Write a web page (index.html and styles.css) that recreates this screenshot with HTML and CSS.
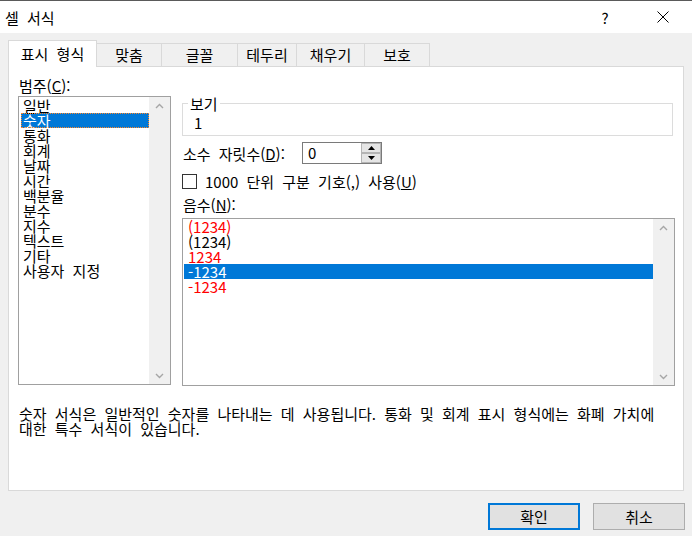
FILE: index.html
```html
<!DOCTYPE html>
<html lang="ko">
<head>
<meta charset="utf-8">
<title>셀 서식</title>
<link rel="stylesheet" href="styles.css">
</head>
<body>
<div class="window">
  <div class="titlebar">
    <span class="title">셀 서식</span>
    <span class="help">?</span>
    <span class="close"><svg width="12" height="12" viewBox="0 0 12 12"><path d="M0.5 0.5 L11.5 11.5 M11.5 0.5 L0.5 11.5" stroke="#000" stroke-width="1" fill="none"/></svg></span>
  </div>
  <div class="body">
    <div class="tabs">
      <div class="tab active w89">표시 형식</div>
      <div class="tab w65">맞춤</div>
      <div class="tab w76">글꼴</div>
      <div class="tab w59">테두리</div>
      <div class="tab w68">채우기</div>
      <div class="tab w65">보호</div>
    </div>
    <div class="panel">
      <div class="columns">
        <div class="leftcol">
          <div class="label">범주(<u>C</u>):</div>
          <div class="listbox cat">
            <ul class="items">
              <li>일반</li>
              <li class="sel focus">숫자</li>
              <li>통화</li>
              <li>회계</li>
              <li>날짜</li>
              <li>시간</li>
              <li>백분율</li>
              <li>분수</li>
              <li>지수</li>
              <li>텍스트</li>
              <li>기타</li>
              <li>사용자 지정</li>
            </ul>
            <div class="vscroll">
              <span class="arrow"><svg width="9" height="6" viewBox="0 0 9 6"><path d="M1 5 L4.5 1.5 L8 5" stroke="#a6a6a6" stroke-width="1.4" fill="none"/></svg></span>
              <span class="arrow"><svg width="9" height="6" viewBox="0 0 9 6"><path d="M1 1 L4.5 4.5 L8 1" stroke="#a6a6a6" stroke-width="1.4" fill="none"/></svg></span>
            </div>
          </div>
        </div>
        <div class="rightcol">
          <fieldset class="sample">
            <legend>보기</legend>
            <div class="sample-value">1</div>
          </fieldset>
          <div class="row decimals">
            <span class="dec-label">소수 자릿수(<u>D</u>):</span>
            <div class="spinbox">
              <span class="spin-value">0</span>
              <div class="spin">
                <span class="spin-btn"><svg width="7" height="4" viewBox="0 0 7 4"><path d="M0 4 L3.5 0 L7 4 Z" fill="#000"/></svg></span>
                <span class="spin-btn"><svg width="7" height="4" viewBox="0 0 7 4"><path d="M0 0 L3.5 4 L7 0 Z" fill="#000"/></svg></span>
              </div>
            </div>
          </div>
          <div class="row check">
            <span class="box"></span>
            <span class="check-label">1000 단위 구분 기호(,) 사용(<u>U</u>)</span>
          </div>
          <div class="label neg-label">음수(<u>N</u>):</div>
          <div class="listbox neg">
            <ul class="items">
              <li class="red">(1234)</li>
              <li>(1234)</li>
              <li class="red">1234</li>
              <li class="sel">-1234</li>
              <li class="red">-1234</li>
            </ul>
            <div class="vscroll">
              <span class="arrow"><svg width="9" height="6" viewBox="0 0 9 6"><path d="M1 5 L4.5 1.5 L8 5" stroke="#a6a6a6" stroke-width="1.4" fill="none"/></svg></span>
              <span class="arrow"><svg width="9" height="6" viewBox="0 0 9 6"><path d="M1 1 L4.5 4.5 L8 1" stroke="#a6a6a6" stroke-width="1.4" fill="none"/></svg></span>
            </div>
          </div>
        </div>
      </div>
      <p class="desc">숫자 서식은 일반적인 숫자를 나타내는 데 사용됩니다. 통화 및 회계 표시 형식에는 화폐 가치에<br>대한 특수 서식이 있습니다.</p>
    </div>
    <div class="buttons">
      <button class="btn default">확인</button>
      <button class="btn">취소</button>
    </div>
  </div>
</div>
</body>
</html>
```

FILE: styles.css
```css
html, body {
  margin: 0;
  padding: 0;
}
body {
  width: 692px;
  height: 536px;
  overflow: hidden;
  background: #f0f0f0;
  font-family: "Liberation Sans Narrow", "Noto Sans CJK KR", sans-serif;
  font-size: 15px;
  word-spacing: 4px;
  color: #000;
}
.window {
  width: 692px;
  height: 536px;
}
.titlebar {
  height: 32px;
  border-top: 1px solid #5a5a5a;
  background: #fff;
  display: flex;
  align-items: center;
}
.title {
  margin-left: 5px;
  line-height: 17px;
  flex: 1;
}
.help {
  width: 46px;
  text-align: center;
  font-size: 15px;
  line-height: 17px;
  margin-right: 12px;
}
.close {
  width: 46px;
  height: 32px;
  display: flex;
  align-items: center;
  justify-content: center;
  margin-right: 6px;
}
.body {
  padding: 7px 0 0 0;
}
.tabs {
  display: flex;
  align-items: flex-end;
  height: 26px;
  margin-left: 8px;
}
.tab {
  box-sizing: border-box;
  height: 23px;
  border-top: 1px solid #d9d9d9;
  border-right: 1px solid #d9d9d9;
  text-align: center;
  line-height: 22px;
  background: #f0f0f0;
}
.tab.active {
  height: 27px;
  margin-bottom: -1px;
  border-left: 1px solid #d9d9d9;
  background: #fff;
  line-height: 25px;
  position: relative;
  z-index: 1;
}
.w89 { width: 89px; }
.w65 { width: 65px; }
.w76 { width: 76px; }
.w59 { width: 59px; }
.w68 { width: 68px; }
.panel {
  box-sizing: border-box;
  width: 676px;
  height: 425px;
  margin-left: 8px;
  background: #fff;
  border: 1px solid #d9d9d9;
  padding: 10px 8px 0 9px;
}
.columns {
  display: flex;
  gap: 11px;
}
.leftcol {
  width: 153px;
  flex: none;
}
.rightcol {
  width: 493px;
  flex: none;
}
.label {
  line-height: 17px;
  padding-left: 1px;
}
.listbox {
  box-sizing: border-box;
  border: 1px solid #a0a0a0;
  background: #fff;
  display: flex;
}
.listbox.cat {
  margin-top: 2px;
  height: 289px;
}
.items {
  list-style: none;
  margin: 0;
  padding: 0;
  flex: 1;
}
.items li {
  height: 15px;
  line-height: 15px;
  white-space: nowrap;
}
.cat .items {
  padding: 1px 0 0 2px;
}
.cat .items li {
  padding-left: 2px;
}
.items li.sel {
  background: #0078d7;
  color: #fff;
}
.items li.focus {
  outline: 1px dotted #ff8728;
  outline-offset: -1px;
}
.vscroll {
  width: 21px;
  flex: none;
  background: #f0f0f0;
  display: flex;
  flex-direction: column;
  justify-content: space-between;
}
.arrow {
  height: 17px;
  display: flex;
  align-items: center;
  justify-content: center;
}
.sample {
  margin: 18px 2px 0 0;
  padding: 0 0 4px 5px;
  border: 1px solid #dcdcdc;
  min-width: 0;
}
.sample legend {
  padding: 0 2px;
  line-height: 17px;
}
.sample-value {
  margin-top: 2px;
  line-height: 17px;
  padding-left: 6px;
}
.row {
  display: flex;
  align-items: center;
}
.decimals {
  margin-top: 6px;
  height: 22px;
}
.dec-label {
  width: 120px;
  flex: none;
  padding-left: 1px;
  box-sizing: border-box;
}
.spinbox {
  box-sizing: border-box;
  width: 80px;
  height: 22px;
  border: 1px solid #7a7a7a;
  background: #fff;
  display: flex;
}
.spin-value {
  flex: 1;
  line-height: 20px;
  padding-left: 5px;
}
.spin {
  width: 20px;
  display: flex;
  flex-direction: column;
}
.spin-btn {
  box-sizing: border-box;
  height: 10px;
  background: #e5e5e5;
  border: 1px solid #b4b4b4;
  display: flex;
  align-items: center;
  justify-content: center;
}
.check {
  margin-top: 10px;
  height: 15px;
}
.box {
  box-sizing: border-box;
  width: 15px;
  height: 15px;
  border: 1px solid #333;
  background: #fff;
  flex: none;
}
.check-label {
  margin-left: 8px;
  line-height: 15px;
}
.neg-label {
  margin-top: 7px;
}
.listbox.neg {
  margin-top: 5px;
  height: 168px;
}
.neg .items {
  padding-left: 1px;
}
.neg .items li {
  padding-left: 4px;
}
.items li.red {
  color: #ff0000;
}
.desc {
  margin: 20px 0 0 0;
  padding-left: 1px;
  line-height: 15px;
  white-space: nowrap;
}
.buttons {
  display: flex;
  justify-content: flex-end;
  gap: 13px;
  margin-top: 12px;
  padding-right: 7px;
}
.btn {
  box-sizing: border-box;
  width: 92px;
  height: 27px;
  font: inherit;
  word-spacing: inherit;
  line-height: 17px;
  padding: 0;
  background: #e1e1e1;
  border: 1px solid #adadad;
  color: #000;
}
.btn.default {
  border: 2px solid #0078d7;
}
```
